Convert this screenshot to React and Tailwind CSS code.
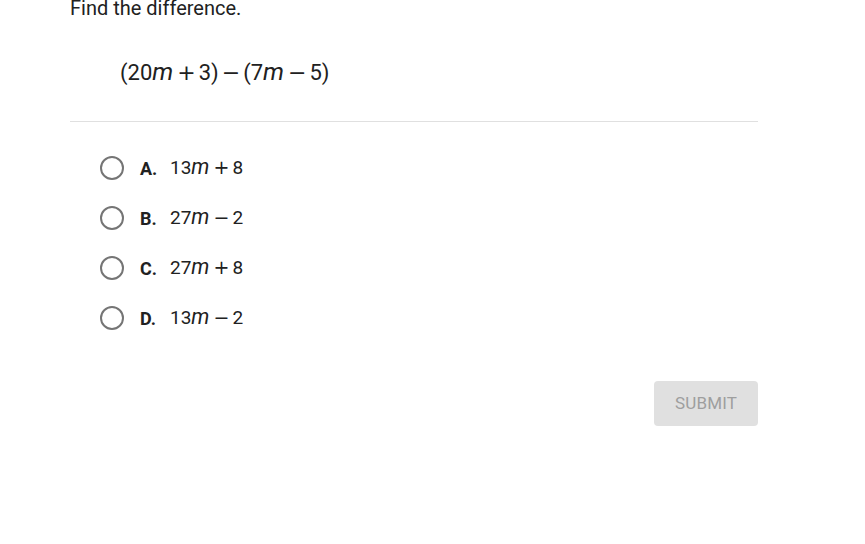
const options = [
  { letter: "A.", a: "13", op: "+", b: "8" },
  { letter: "B.", a: "27", op: "−", b: "2" },
  { letter: "C.", a: "27", op: "+", b: "8" },
  { letter: "D.", a: "13", op: "−", b: "2" },
];

const M = () => <span className="italic text-[1.12em] leading-none mr-[1px]">m</span>;
const Op = ({ children }) => (
  <span className="mx-[3px]" style={{ fontFamily: '"DejaVu Sans", sans-serif' }}>{children}</span>
);

export default function App() {
  return (
    <div className="min-h-[544px] w-[865px] bg-white text-[#212121]" style={{ fontFamily: "Roboto, sans-serif" }}>
      <div className="ml-[70px] w-[688px] -mt-[4px]">
        <p className="text-[20px] leading-[24px]">Find the difference.</p>

        <div className="pl-[50px] pt-[39px] pb-[34px] text-[22px] leading-[28px] h-[101px]">
          (20<M /><Op>+</Op>3)<Op>−</Op>(7<M /><Op>−</Op>5)
        </div>

        <div className="border-t border-[#e0e0e0]" />

        <div className="flex flex-col gap-[26px] pt-[34px] pl-[30px]">
          {options.map((o) => (
            <label key={o.letter} className="flex items-center h-[24px] cursor-pointer">
              <span className="w-[24px] h-[24px] rounded-full border-2 border-[#757575]" />
              <span className="ml-[16px] w-[30px] font-bold text-[18px]">{o.letter}</span>
              <span className="text-[19px]">
                {o.a}<M /><Op>{o.op}</Op>{o.b}
              </span>
            </label>
          ))}
        </div>

        <div className="flex justify-end pt-[51px]">
          <button className="w-[104px] h-[45px] rounded-[4px] bg-[#e0e0e0] text-[#9e9e9e] text-[17px] tracking-[0.01em]">
            SUBMIT
          </button>
        </div>
      </div>
    </div>
  );
}
